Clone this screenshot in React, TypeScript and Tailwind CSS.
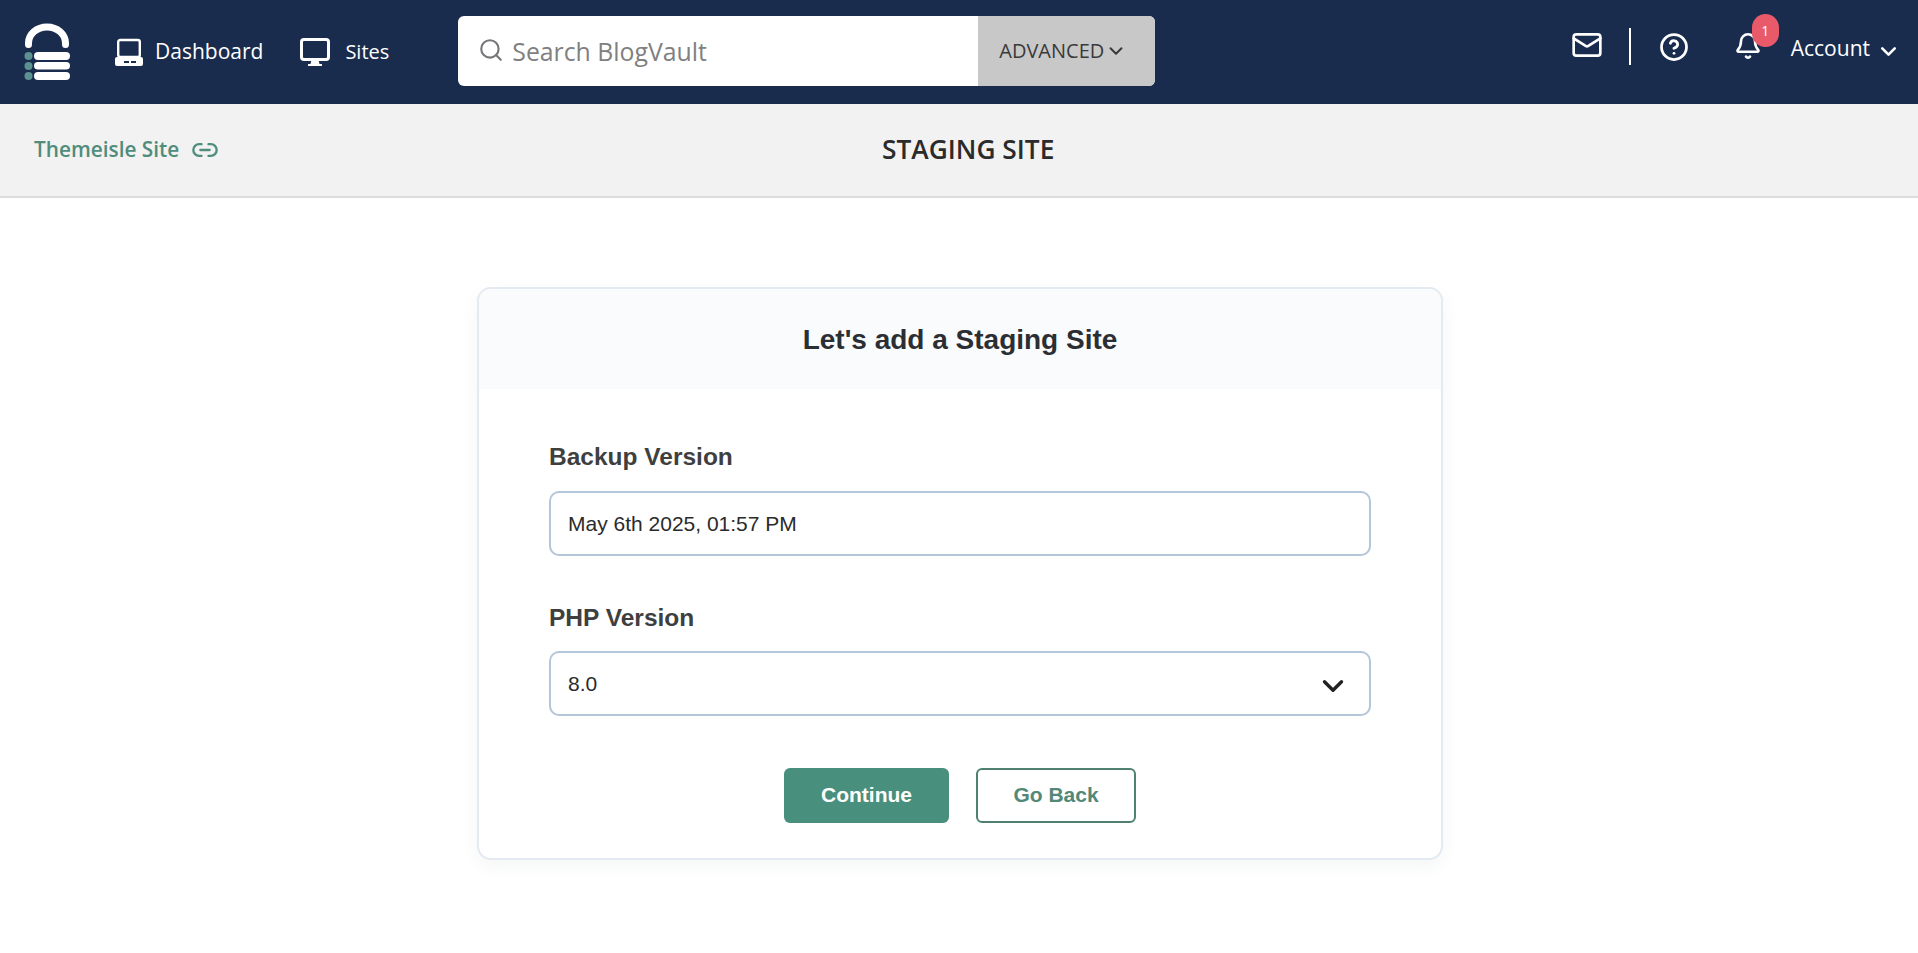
import { Bell, ChevronDown, CircleHelp, Link2, Mail, Search } from "lucide-react";

const openSans = { fontFamily: '"Open Sans", sans-serif' };

function Logo() {
  return (
    <svg width="46" height="57" viewBox="0 0 46 57" fill="none" aria-label="BlogVault">
      <path d="M4.5 21.5V20a18.5 16 0 0 1 37 0v1.5" stroke="#fff" strokeWidth="7" strokeLinecap="round" />
      <rect x="10" y="29" width="36" height="8" rx="4" fill="#fff" />
      <rect x="10" y="39" width="36" height="7.5" rx="3.75" fill="#fff" />
      <rect x="10" y="49" width="36" height="8" rx="4" fill="#fff" />
      <circle cx="4.5" cy="33" r="4" fill="#5b9190" />
      <circle cx="4.5" cy="43" r="4" fill="#5b9190" />
      <circle cx="4.5" cy="53" r="4" fill="#5b9190" />
    </svg>
  );
}

function DashboardIcon() {
  return (
    <svg width="28" height="28" viewBox="0 0 28 28" fill="none">
      <rect x="3.2" y="2" width="21.6" height="17" rx="2" stroke="#fff" strokeWidth="2.4" />
      <path fillRule="evenodd" clipRule="evenodd" d="M2 19h24a2 2 0 0 1 2 2v5a2 2 0 0 1-2 2H2a2 2 0 0 1-2-2v-5a2 2 0 0 1 2-2Zm7 4v2h5v-2H9Zm7 0v2h5v-2h-5Z" fill="#fff" />
    </svg>
  );
}

function SitesIcon() {
  return (
    <svg width="30" height="28" viewBox="0 0 30 28" fill="none">
      <rect x="1.5" y="1.5" width="27" height="20" rx="2.5" stroke="#fff" strokeWidth="3" />
      <path d="M11.5 22h7l1 4h2.5v2H8v-2h2.5l1-4Z" fill="#fff" />
    </svg>
  );
}

function NavLink({ icon, label, className }: { icon: React.ReactNode; label: string; className: string }) {
  return (
    <a href="#" className={`flex items-center text-white ${className}`}>
      {icon}
      <span>{label}</span>
    </a>
  );
}

export default function App() {
  return (
    <div className="min-h-screen bg-white" style={openSans}>
      {/* Top nav */}
      <header className="flex h-[104px] items-center bg-[#1a2c4e] pl-6 pr-[17px]">
        <div className="mb-[1px]">
          <Logo />
        </div>
        <NavLink icon={<DashboardIcon />} label="Dashboard" className="ml-[45px] gap-[12px] text-[21px]" />
        <NavLink icon={<SitesIcon />} label="Sites" className="ml-[37px] gap-[15px] text-[20px]" />

        <div className="mb-[2px] ml-[69px] flex h-[70px] w-[697px] overflow-hidden rounded-[6px] bg-white">
          <div className="flex flex-1 items-center pl-[20px]">
            <Search className="mb-[2px] h-[26px] w-[26px] text-[#77787c]" strokeWidth={2} />
            <input
              placeholder="Search BlogVault"
              className="ml-[8px] mt-[1px] w-[400px] bg-transparent text-[24.8px] outline-none placeholder:text-[#808080]"
            />
          </div>
          <button className="flex w-[177px] items-center gap-[1px] bg-[#c8c8c8] pl-[21px] text-[20px] text-[#3a3a3a]">
            ADVANCED
            <ChevronDown className="h-[22px] w-[22px]" strokeWidth={2.2} />
          </button>
        </div>

        <div className="mb-[11px] ml-auto flex items-center text-white">
          <Mail className="mb-[3px] h-[32px] w-[32px]" strokeWidth={2} />
          <div className="ml-[26px] h-[37px] w-[2px] bg-white" />
          <CircleHelp className="ml-[28px] h-[30px] w-[30px]" strokeWidth={2.2} />
          <div className="relative mb-[1px] ml-[45px]">
            <Bell className="h-[28px] w-[28px]" strokeWidth={2.2} />
            <span className="absolute -right-[17px] -top-[18px] flex h-[33px] w-[27px] items-center justify-center rounded-full bg-[#e8596a] text-[14px] text-white">
              1
            </span>
          </div>
          <span className="ml-[29px] mt-[4px] text-[21px]">Account</span>
          <ChevronDown className="ml-[6px] mt-[9px] h-[25px] w-[25px]" strokeWidth={2.5} />
        </div>
      </header>

      {/* Sub header */}
      <div className="relative flex h-[94px] items-center border-b-2 border-[#dcdcdc] bg-[#f2f2f2] pl-[34px]">
        <a href="#" className="flex items-center gap-[12px] text-[20.8px] font-semibold text-[#4f8d7c]">
          Themeisle Site
          <Link2 className="h-[28px] w-[28px]" strokeWidth={2} />
        </a>
        <h1 className="absolute left-[882px] text-[26.3px] font-semibold text-[#2b2b2b]">STAGING SITE</h1>
      </div>

      {/* Card */}
      <main className="flex justify-center pt-[89px]" style={{ fontFamily: '"Liberation Sans", Arial, sans-serif' }}>
        <div className="mr-[-2px] w-[966px] overflow-hidden rounded-[14px] border-2 border-[#e3eaf1] bg-white shadow-[0_6px_18px_rgba(30,50,80,0.05)]">
          <div className="flex h-[100px] items-center justify-center bg-[#fafbfd] pt-[2px]">
            <h2 className="text-[28px] font-bold text-[#2b2f33]">Let's add a Staging Site</h2>
          </div>
          <div className="px-[70px] pb-[35px] pt-[52px]">
            <label className="block text-[24.5px] font-bold leading-[32px] text-[#3f3f3f]">Backup Version</label>
            <input
              readOnly
              defaultValue="May 6th 2025, 01:57 PM"
              className="mt-[18px] block h-[65px] w-full rounded-[10px] border-2 border-[#b3c6da] px-[17px] text-[21px] text-[#2b2b2b] outline-none"
            />
            <label className="mt-[46px] block text-[24.5px] font-bold leading-[32px] text-[#3f3f3f]">PHP Version</label>
            <div className="relative mt-[17px]">
              <select
                defaultValue="8.0"
                className="block h-[65px] w-full appearance-none rounded-[10px] border-2 border-[#b3c6da] bg-white px-[17px] text-[21px] text-[#2b2b2b] outline-none"
              >
                <option>8.0</option>
              </select>
              <ChevronDown className="absolute right-[21px] top-[18px] h-[34px] w-[34px] text-[#222]" strokeWidth={2.4} />
            </div>
            <div className="mt-[52px] flex justify-center gap-[27px]">
              <button className="h-[55px] w-[165px] rounded-[6px] bg-[#488f7e] pb-[2px] text-[21px] font-bold text-white">Continue</button>
              <button className="h-[55px] w-[160px] rounded-[6px] border-2 border-[#4f8070] pb-[2px] text-[21px] font-bold text-[#528878]">Go Back</button>
            </div>
          </div>
        </div>
      </main>
    </div>
  );
}
